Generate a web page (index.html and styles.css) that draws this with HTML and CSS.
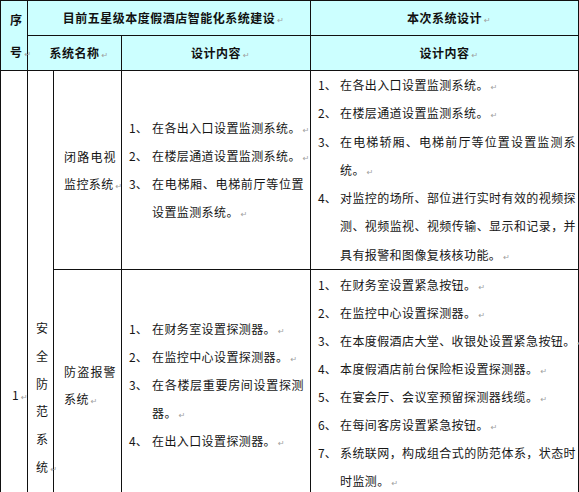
FILE: index.html
```html
<!DOCTYPE html>
<html lang="zh-CN">
<head>
<meta charset="utf-8">
<title>系统设计对比表</title>
<link rel="stylesheet" href="styles.css">
</head>
<body>
<table class="grid">
  <colgroup>
    <col class="c1"><col class="c2"><col class="c3"><col class="c4"><col class="c5">
  </colgroup>
  <thead>
    <tr class="h1">
      <th rowspan="2" class="seq">序号<span class="pm">↵</span></th>
      <th colspan="3">目前五星级本度假酒店智能化系统建设<span class="pm">↵</span></th>
      <th>本次系统设计<span class="pm">↵</span></th>
    </tr>
    <tr class="h2">
      <th colspan="2">系统名称<span class="pm">↵</span></th>
      <th>设计内容<span class="pm">↵</span></th>
      <th>设计内容<span class="pm">↵</span></th>
    </tr>
  </thead>
  <tbody>
    <tr class="ra">
      <td rowspan="2" class="no">1<span class="pm">↵</span></td>
      <td rowspan="2" class="cat">安全防范系统<span class="pm">↵</span></td>
      <td class="name">闭路电视监控系统<span class="pm">↵</span></td>
      <td class="list mid">
        <div class="item"><span class="num">1、</span><span class="txt">在各出入口设置监测系统。<span class="pm">↵</span></span></div>
        <div class="item"><span class="num">2、</span><span class="txt">在楼层通道设置监测系统。<span class="pm">↵</span></span></div>
        <div class="item"><span class="num">3、</span><span class="txt">在电梯厢、电梯前厅等位置设置监测系统。<span class="pm">↵</span></span></div>
      </td>
      <td class="list side top-a">
        <div class="item"><span class="num">1、</span><span class="txt">在各出入口设置监测系统。<span class="pm">↵</span></span></div>
        <div class="item"><span class="num">2、</span><span class="txt">在楼层通道设置监测系统。<span class="pm">↵</span></span></div>
        <div class="item"><span class="num">3、</span><span class="txt">在电梯轿厢、电梯前厅等位置设置监测系统。<span class="pm">↵</span></span></div>
        <div class="item"><span class="num">4、</span><span class="txt">对监控的场所、部位进行实时有效的视频探测、视频监视、视频传输、显示和记录，并具有报警和图像复核核功能。<span class="pm">↵</span></span></div>
      </td>
    </tr>
    <tr class="rb">
      <td class="name">防盗报警系统<span class="pm">↵</span></td>
      <td class="list mid">
        <div class="item"><span class="num">1、</span><span class="txt">在财务室设置探测器。<span class="pm">↵</span></span></div>
        <div class="item"><span class="num">2、</span><span class="txt">在监控中心设置探测器。<span class="pm">↵</span></span></div>
        <div class="item"><span class="num">3、</span><span class="txt">在各楼层重要房间设置探测器。<span class="pm">↵</span></span></div>
        <div class="item"><span class="num">4、</span><span class="txt">在出入口设置探测器。<span class="pm">↵</span></span></div>
      </td>
      <td class="list side top-b">
        <div class="item"><span class="num">1、</span><span class="txt">在财务室设置紧急按钮。<span class="pm">↵</span></span></div>
        <div class="item"><span class="num">2、</span><span class="txt">在监控中心设置探测器。<span class="pm">↵</span></span></div>
        <div class="item"><span class="num">3、</span><span class="txt">在本度假酒店大堂、收银处设置紧急按钮。<span class="pm">↵</span></span></div>
        <div class="item"><span class="num">4、</span><span class="txt">本度假酒店前台保险柜设置探测器。<span class="pm">↵</span></span></div>
        <div class="item"><span class="num">5、</span><span class="txt">在宴会厅、会议室预留探测器线缆。<span class="pm">↵</span></span></div>
        <div class="item"><span class="num">6、</span><span class="txt">在每间客房设置紧急按钮。<span class="pm">↵</span></span></div>
        <div class="item"><span class="num">7、</span><span class="txt">系统联网，构成组合式的防范体系，状态时时监测。<span class="pm">↵</span></span></div>
      </td>
    </tr>
  </tbody>
</table>
</body>
</html>
```

FILE: styles.css
```css
html, body {
  margin: 0;
  padding: 0;
  background: #ffffff;
  overflow: hidden;
}

.grid {
  border-collapse: collapse;
  table-layout: fixed;
  width: 578px;
  font-family: "Noto Sans CJK SC", sans-serif;
  font-size: 12px;
  letter-spacing: 0.4px;
  color: #161616;
}

.c1 { width: 27px; }
.c2 { width: 26px; }
.c3 { width: 68px; }
.c4 { width: 189px; }
.c5 { width: 268px; }

.grid th,
.grid td {
  border: 1px solid #111111;
  padding: 0;
}

.grid th {
  background: #ccffff;
  font-weight: 700;
  text-align: center;
  vertical-align: middle;
  letter-spacing: 0.5px;
  color: #111111;
  line-height: 20px;
}

.h1 { height: 35px; }
.h2 { height: 35px; }
.ra { height: 197px; }
.rb { height: 231px; }

.grid th.seq {
  text-align: left;
  padding-left: 9px;
  line-height: 32px;
}

.no {
  vertical-align: top;
  padding-top: 310px !important;
  padding-left: 11px !important;
  line-height: 28px;
}

.cat {
  vertical-align: top;
  padding-top: 243px !important;
  padding-left: 8px !important;
  line-height: 27.8px;
}

.name {
  vertical-align: middle;
  padding: 0 5px 0 10px !important;
  text-align: justify;
  line-height: 27px;
}

.list {
  vertical-align: middle;
  line-height: 28px;
}

.mid {
  padding: 0 6px 0 7px !important;
}

.side {
  padding: 0 2px 0 7px !important;
}

.top-a {
  line-height: 28.3px;
}

.top-b {
  vertical-align: top;
  padding-top: 1px !important;
}

.item {
  display: flex;
}

.num {
  flex: 0 0 22px;
  white-space: nowrap;
  letter-spacing: 0;
}

.mid .num {
  flex-basis: 23px;
}

.txt {
  flex: 1 1 auto;
  min-width: 0;
  text-align: justify;
}

.pm {
  display: inline-block;
  width: 0;
  line-height: 8px;
  text-indent: 2px;
  white-space: nowrap;
  font-family: "DejaVu Sans", sans-serif;
  font-size: 8px;
  font-weight: 400;
  letter-spacing: 0;
  color: #a0a0a0;
}
```
